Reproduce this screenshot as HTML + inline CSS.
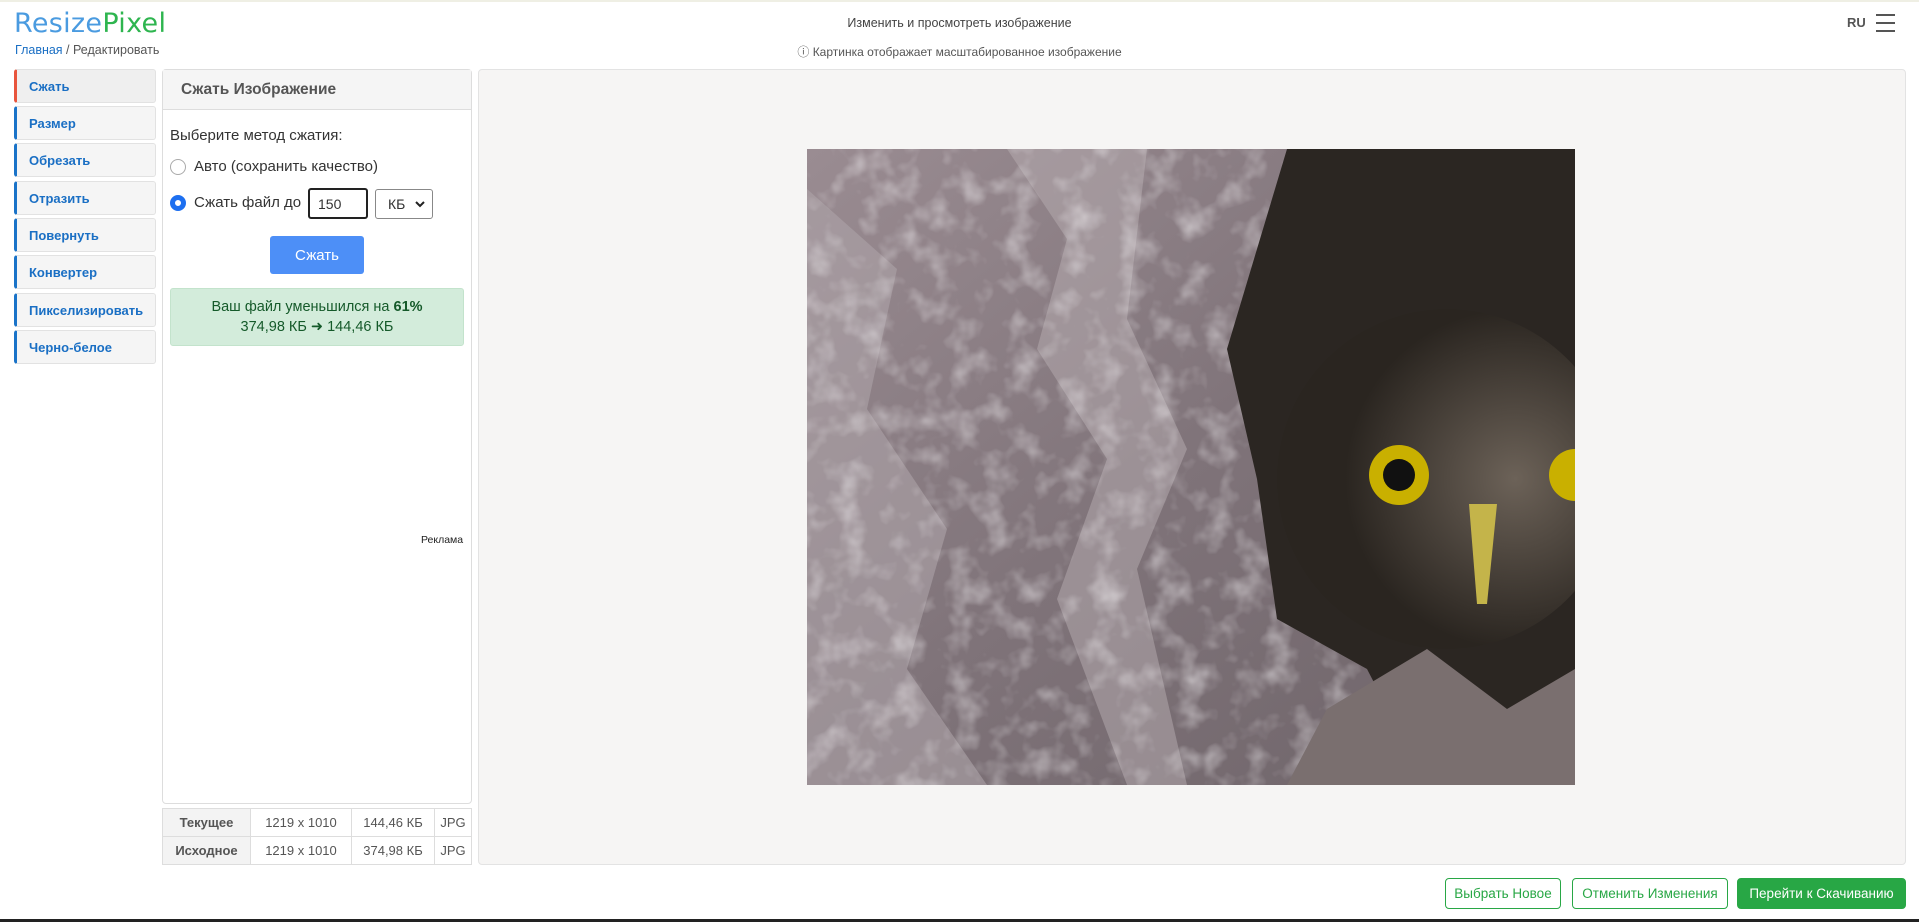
<!DOCTYPE html>
<html><head><meta charset="utf-8"><style>
*{box-sizing:border-box;margin:0;padding:0}
body{width:1919px;height:922px;background:#fff;font-family:"Liberation Sans","DejaVu Sans",sans-serif;position:relative;overflow:hidden;color:#333}
.abs{position:absolute}
.logo{left:14px;top:8px;font-size:27px;letter-spacing:0.3px;font-family:"DejaVu Sans","Liberation Sans",sans-serif}
.crumb{left:15px;top:43px;font-size:12.5px;color:#555}
.crumb a{color:#1a6fc4;text-decoration:none}
.side{left:14px;width:142px;height:34px;background:#f5f5f5;border:1px solid #e2e2e2;border-left:3px solid #1a73c8;border-radius:3px;font-size:13px;font-weight:bold;color:#1a6fc4;padding:9px 0 0 12px}
.panel{left:162px;top:69px;width:310px;height:735px;border:1px solid #ddd;border-radius:4px;background:#fff}
.ph{height:40px;background:#f5f5f5;border-bottom:1px solid #ddd;font-size:15.5px;font-weight:bold;color:#555;padding:11px 0 0 18px}
.t{font-size:15px;color:#333}
.radio{width:16px;height:16px;border-radius:50%;border:1px solid #aaa;background:#fff}
.radio.on{border:5px solid #1d6ff0}
table{border-collapse:collapse;font-size:13px;color:#555}
td{border:1px solid #ddd;height:28px;text-align:center}
.btn{top:878px;height:31px;border:1px solid #28a745;border-radius:4px;font-size:13.5px;color:#28a745;text-align:center;padding-top:7px;background:#fff}
</style></head><body>
<div class="abs" style="left:0;top:0;width:1919px;height:2px;background:#efefe4"></div>
<div class="abs logo"><span style="color:#4a9be0">Resize</span><span style="color:#2eb54f">Pixel</span></div>
<div class="abs crumb"><a>Главная</a> / Редактировать</div>
<div class="abs" style="left:0;width:1919px;top:16px;text-align:center;font-size:12.5px;color:#444">Изменить и просмотреть изображение</div>
<div class="abs" style="left:0;width:1919px;top:43px;text-align:center;font-size:12px;color:#555">ⓘ Картинка отображает масштабированное изображение</div>
<div class="abs" style="left:1847px;top:15px;font-size:13px;font-weight:bold;color:#555">RU</div>
<div class="abs" style="left:1876px;top:14px;width:19px">
<div style="height:2px;background:#555;margin-bottom:6px"></div><div style="height:2px;background:#555;margin-bottom:6px"></div><div style="height:2px;background:#555"></div></div>

<div class="abs side" style="top:69px;border-left-color:#e8553d;background:#efefef">Сжать</div>
<div class="abs side" style="top:106px">Размер</div>
<div class="abs side" style="top:143px">Обрезать</div>
<div class="abs side" style="top:181px">Отразить</div>
<div class="abs side" style="top:218px">Повернуть</div>
<div class="abs side" style="top:255px">Конвертер</div>
<div class="abs side" style="top:293px">Пикселизировать</div>
<div class="abs side" style="top:330px">Черно-белое</div>

<div class="abs panel"><div class="ph">Сжать Изображение</div></div>
<div class="abs t" style="left:170px;top:127px">Выберите метод сжатия:</div>
<div class="abs radio" style="left:170px;top:159px"></div>
<div class="abs t" style="left:194px;top:158px">Авто (сохранить качество)</div>
<div class="abs radio on" style="left:170px;top:195px"></div>
<div class="abs t" style="left:194px;top:194px">Сжать файл до</div>
<div class="abs" style="left:308px;top:188px;width:60px;height:31px;border:2px solid #222;border-radius:3px;font-size:14px;padding:6px 0 0 8px">150</div>
<div class="abs" style="left:375px;top:189px;width:58px;height:30px;border:1px solid #888;border-radius:3px;font-size:14px;padding:6px 0 0 12px">КБ<svg style="position:absolute;right:7px;top:11px" width="10" height="7"><path d="M1 1 L5 5 L9 1" stroke="#222" stroke-width="2" fill="none"/></svg></div>
<div class="abs" style="left:270px;top:236px;width:94px;height:38px;background:#4d8ff7;border-radius:3px;color:#fff;font-size:15px;text-align:center;padding-top:11px">Сжать</div>
<div class="abs" style="left:170px;top:288px;width:294px;height:58px;background:#d3ecdb;border:1px solid #c3e3cc;border-radius:3px;text-align:center;font-size:14.5px;color:#155a2a;padding-top:8px;line-height:20px">Ваш файл уменьшился на <b>61%</b><br>374,98 КБ ➜ 144,46 КБ</div>
<div class="abs" style="left:421px;top:534px;font-size:10.5px;color:#222">Реклама</div>

<table class="abs" style="left:162px;top:808px;width:310px">
<tr><td style="width:88px;background:#f3f3f3;font-weight:bold">Текущее</td><td style="width:101px">1219 x 1010</td><td style="width:83px">144,46 КБ</td><td>JPG</td></tr>
<tr><td style="background:#f3f3f3;font-weight:bold">Исходное</td><td>1219 x 1010</td><td>374,98 КБ</td><td>JPG</td></tr>
</table>

<div class="abs" style="left:478px;top:69px;width:1428px;height:796px;background:#f6f5f4;border:1px solid #e3e3e3;border-radius:4px"></div>
<svg class="abs" style="left:807px;top:149px" width="768" height="636" viewBox="0 0 768 636">
<defs>
<linearGradient id="b" x1="0" y1="0" x2="1" y2="1"><stop offset="0" stop-color="#9a8c92"/><stop offset="0.5" stop-color="#7f7379"/><stop offset="1" stop-color="#6d6368"/></linearGradient>
<radialGradient id="o" cx="0.7" cy="0.5" r="0.5"><stop offset="0" stop-color="#6c6258"/><stop offset="1" stop-color="#2a2520"/></radialGradient>
<filter id="n"><feTurbulence type="fractalNoise" baseFrequency="0.035" numOctaves="3" seed="4"/><feColorMatrix type="matrix" values="0 0 0 0 0.9  0 0 0 0 0.88  0 0 0 0 0.9  0 0 0 1.6 -0.75"/></filter>
</defs>
<rect width="768" height="636" fill="url(#b)"/>
<path d="M0 40 L90 120 L60 260 L140 380 L100 520 L180 636 L0 636Z" fill="#aea3a8" opacity="0.6"/>
<path d="M200 0 L260 90 L230 200 L300 310 L250 450 L320 636 L380 636 L330 420 L380 300 L320 170 L340 0Z" fill="#b8adb2" opacity="0.5"/>
<rect width="768" height="636" filter="url(#n)" opacity="0.7"/>
<path d="M480 0 L768 0 L768 636 L620 636 L560 520 L470 470 L450 330 L420 200 L450 100Z" fill="#2b2622"/>
<ellipse cx="640" cy="330" rx="170" ry="170" fill="url(#o)"/>
<path d="M520 560 L620 500 L700 560 L768 520 L768 636 L480 636Z" fill="#7a6f6f"/>
<circle cx="592" cy="326" r="30" fill="#c9b000"/><circle cx="592" cy="326" r="16" fill="#111"/>
<circle cx="768" cy="326" r="26" fill="#c9b000"/>
<path d="M662 355 L690 355 L680 455 L670 455Z" fill="#c4b44a"/>
</svg>

<div class="abs btn" style="left:1445px;width:116px">Выбрать Новое</div>
<div class="abs btn" style="left:1572px;width:156px">Отменить Изменения</div>
<div class="abs btn" style="left:1737px;width:169px;background:#28a745;color:#fff">Перейти к Скачиванию</div>
<div class="abs" style="left:0;top:919px;width:1919px;height:3px;background:#222"></div>
</body></html>
